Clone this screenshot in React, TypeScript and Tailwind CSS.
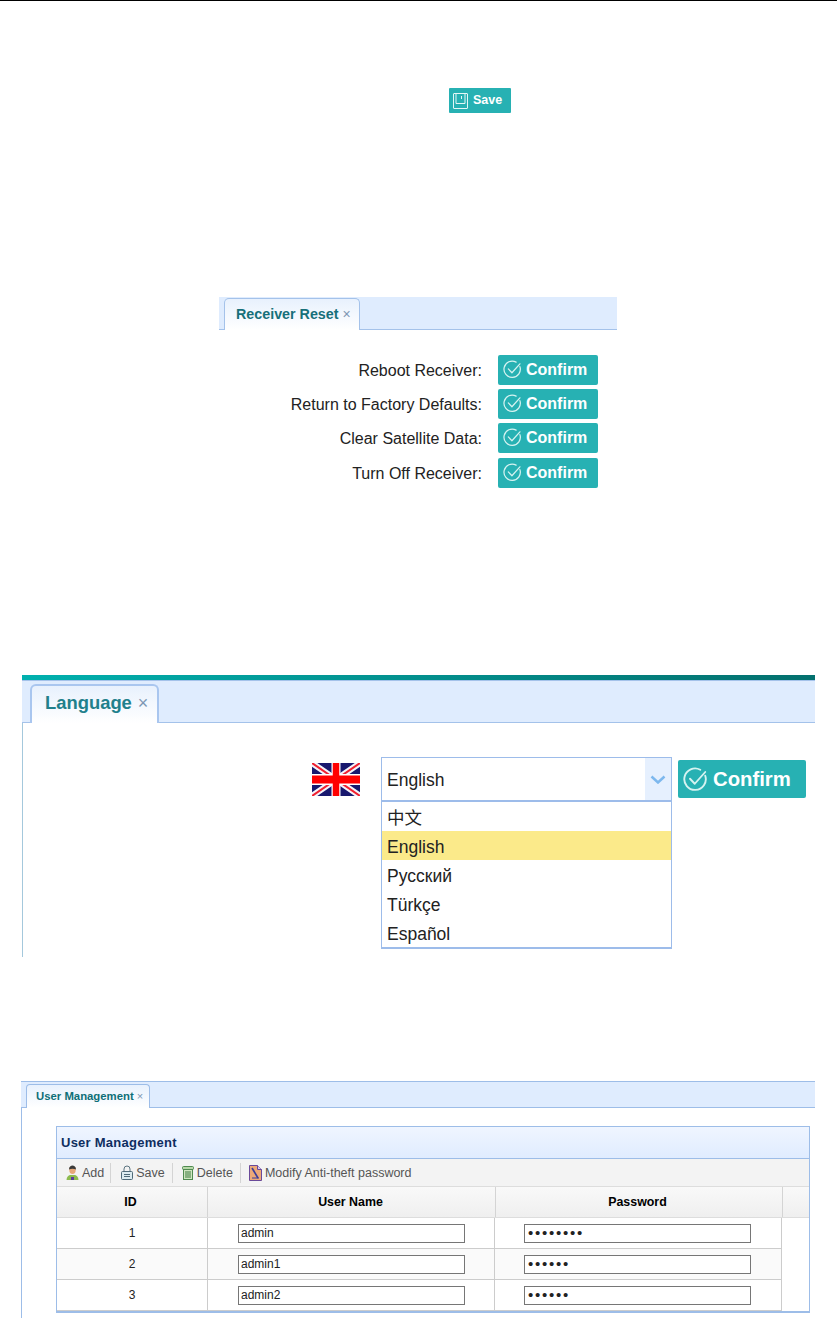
import React from "react";

function CheckCircle({ size, sw = 1.3 }: { size: number; sw?: number }) {
  return (
    <svg width={size} height={size} viewBox="0 0 20 20" fill="none" stroke="#d6f3f1" strokeWidth={sw} className="shrink-0">
      <path d="M17.8 7A8.6 8.6 0 1 1 13.8 2.200" strokeLinecap="round" />
      <path d="M5.600 9.400l3.800 4 8.400-9.400" strokeLinecap="round" strokeLinejoin="round" />
    </svg>
  );
}

function ConfirmBtn() {
  return (
    <div className="w-[100px] h-[30px] bg-[#27b1b3] rounded-[2px] flex items-center pl-[5px] gap-[4px] text-white font-bold text-[16px] leading-none shrink-0">
      <div className="-mt-[1px]"><CheckCircle size={19} /></div>
      <span>Confirm</span>
    </div>
  );
}

function Flag() {
  return (
    <svg width="48" height="33" viewBox="0 0 48 33" className="shrink-0">
      <rect width="48" height="33" fill="#18186e" />
      <path d="M0 0L48 33M48 0L0 33" stroke="#f4f4fa" strokeWidth="6" />
      <path d="M0 0L48 33M48 0L0 33" stroke="#f02030" strokeWidth="2" />
      <path d="M24 0V33" stroke="#fff" strokeWidth="9" />
      <path d="M0 16.500H48" stroke="#fff" strokeWidth="11" />
      <path d="M24 0V33" stroke="#ff0000" strokeWidth="6.500" />
      <path d="M0 16.500H48" stroke="#ff0000" strokeWidth="8" />
    </svg>
  );
}

function AddIcon() {
  return (
    <svg width="13" height="16" viewBox="0 0 13 16" className="shrink-0">
      <path d="M0.5 15c0-3 2-4.500 3.500-5h5c1.500.5 3.500 2 3.500 5z" fill="#8dbb4e" />
      <rect x="5" y="12" width="3" height="3" fill="#5a3e9e" />
      <ellipse cx="6.500" cy="5" rx="3.200" ry="4" fill="#e8a878" />
      <path d="M3 4.500C3 1.500 5 .5 6.500 .5S10 1.500 10 4.500C8 3.500 5 3.500 3 4.500z" fill="#3a3a3a" />
    </svg>
  );
}

function LockIcon() {
  return (
    <svg width="12" height="15" viewBox="0 0 12 15" fill="none" className="shrink-0">
      <path d="M3 7V4a3 3 0 0 1 6 0v3" stroke="#5b7480" />
      <rect x=".5" y="6.500" width="11" height="8" rx="1" fill="#dcebf0" stroke="#4f6a78" />
      <path d="M3 9.500h6M3 11.500h6" stroke="#4f6a78" />
    </svg>
  );
}

function TrashIcon() {
  return (
    <svg width="12" height="15" viewBox="0 0 12 15" fill="none" className="shrink-0">
      <rect x=".5" y="1.500" width="11" height="3" rx="1" fill="#b7d8a8" stroke="#4f8a50" />
      <rect x="1.500" y="4.500" width="9" height="10" fill="#cfe6c0" stroke="#4f8a50" />
      <path d="M4 6v7M6 6v7M8 6v7" stroke="#3f7a40" />
    </svg>
  );
}

function EditIcon() {
  return (
    <svg width="13" height="16" viewBox="0 0 13 16" className="shrink-0">
      <path d="M.5 .5H8.500L12.500 4.500V15.500H.5z" fill="#eda878" stroke="#6a4a9a" />
      <path d="M8.500 .5V4.500H12.500" fill="#d8c8f0" stroke="#6a4a9a" />
      <path d="M3 3L9 13" stroke="#3a3a9a" strokeWidth="1.600" />
      <path d="M3 13h7" stroke="#3a3a9a" />
    </svg>
  );
}

function Sep({ className }: { className: string }) {
  return <div className={`w-px h-[20px] bg-[#d4d4d4] ${className}`} />;
}

function Tool({ icon, label }: { icon: React.ReactNode; label: string }) {
  return (
    <div className="flex items-center gap-[3px]">
      {icon}
      <span className="mt-[2px]">{label}</span>
    </div>
  );
}

const rows = [
  { id: "1", name: "admin", pw: "••••••••", bg: "bg-white" },
  { id: "2", name: "admin1", pw: "••••••", bg: "bg-[#fafafa]" },
  { id: "3", name: "admin2", pw: "••••••", bg: "bg-white" },
];

const resetRows = [
  { t: "Reboot Receiver:", c: "" },
  { t: "Return to Factory Defaults:", c: "mt-[4px]" },
  { t: "Clear Satellite Data:", c: "mt-[4px]" },
  { t: "Turn Off Receiver:", c: "mt-[5px]" },
];
const langs = ["中文", "English", "Русский", "Türkçe", "Español"];

export default function App() {
  return (
    <div className="w-[837px] h-[1318px] bg-white overflow-hidden text-black" style={{ fontFamily: '"Liberation Sans", "Noto Sans CJK SC", sans-serif' }}>
      <div className="h-px bg-black" />

      {/* Save button */}
      <div className="mt-[87px] ml-[449px] w-[62px] h-[25px] bg-[#27b1b3] rounded-[1px] flex items-center pl-[4px] gap-[5px] text-white font-bold text-[12.500px] leading-none">
        <svg width="15" height="16" viewBox="0 0 15 16" fill="none" stroke="#e4f7f6" className="shrink-0">
          <path d="M1 .5H14a.5.5 0 0 1 .5 .5V15a.5.5 0 0 1-.5 .5H1a.5.5 0 0 1-.5-.5V1A.5.5 0 0 1 1 .5z" />
          <path d="M3 .5V10.500H12V.5M8.500 3V6" />
        </svg>
        <span>Save</span>
      </div>

      {/* Receiver Reset */}
      <div className="mt-[184px] ml-[219px] w-[398px]">
        <div className="h-[33px] bg-[#dfecfe] border-b border-[#a4c2ea] flex items-end pl-[5px]">
          <div className="w-[136px] h-[32px] -mb-px bg-gradient-to-b from-[#e8f1fd] to-white border border-b-0 border-[#a4c2ea] rounded-t-[5px] flex items-center pl-[11px] gap-[4px] text-[14.300px] font-bold text-[#17707a]">
            <span>Receiver Reset</span>
            <span className="text-[#7d97b4] font-normal text-[14px]">×</span>
          </div>
        </div>
        <div className="mt-[25px] flex flex-col pr-[19px]">
          {resetRows.map((r) => (
            <div key={r.t} className={`flex items-center justify-end gap-[16px] text-[16px] text-[#222] ${r.c}`}>
              <span className="mt-[2px]">{r.t}</span>
              <ConfirmBtn />
            </div>
          ))}
        </div>
      </div>

      {/* Language */}
      <div className="mt-[187px] ml-[22px] w-[793px] h-[282px] border-l border-[#a4c8dc]">
        <div className="h-[5px] -ml-px bg-gradient-to-r from-[#00b0ae] to-[#03706e]" />
        <div className="h-[43px] bg-[#dfecfe] border-t border-b border-[#a4c2ea] flex items-end pl-[8px] -ml-px">
          <div className="w-[129px] h-[39px] -mb-px bg-gradient-to-b from-[#e8f1fd] to-white border-2 border-b-0 border-[#a9c6ef] rounded-t-[6px] flex items-center pl-[13px] pb-[3px] gap-[6px] text-[18.400px] font-bold text-[#21808c]">
            <span>Language</span>
            <span className="text-[#7d97b4] font-normal text-[18px]">×</span>
          </div>
        </div>
        <div className="relative flex items-start">
          <div className="ml-[289px] mt-[40px]"><Flag /></div>
          <div className="ml-[21px] mt-[34px] w-[291px] flex flex-col text-[17.500px] text-[#222]">
            <div className="h-[45px] border border-b-2 border-[#9dbcea] flex items-center pl-[5px] relative">
              <span className="mt-[2px]">English</span>
              <div className="absolute right-0 top-0 bottom-0 w-[26px] bg-[#e6f0fe] flex items-center justify-center">
                <svg width="16" height="9" viewBox="0 0 16 9" fill="none" stroke="#7db8ee" strokeWidth="2.500">
                  <path d="M1.500 1.500L8 7.500L14.500 1.500" />
                </svg>
              </div>
            </div>
            <div className="h-[147px] border border-t-0 border-b-2 border-[#9dbcea] flex flex-col">
              {langs.map((l, i) => (
                <div key={l} className={`h-[29px] flex items-center pl-[5px] pt-[3px] ${i === 1 ? "bg-[#fbea8a]" : ""}`}>{l}</div>
              ))}
            </div>
          </div>
          <div className="ml-[6px] mt-[37px] w-[128px] h-[38px] bg-[#27b1b3] rounded-[2px] flex items-center pl-[5px] gap-[5px] text-white font-bold text-[20.300px] leading-none">
            <CheckCircle size={25} sw={1.500} />
            <span>Confirm</span>
          </div>
        </div>
      </div>

      {/* User Management */}
      <div className="mt-[124px] ml-[21px] w-[794px] border-l border-[#9dbde8] h-[237px]">
        <div className="h-[27px] -ml-px bg-[#dfecfe] border-t border-b border-[#9dbde8] flex items-end pl-[5px]">
          <div className="w-[124px] h-[24px] -mb-px bg-gradient-to-b from-[#e8f1fd] to-white border border-b-0 border-[#9dbde8] rounded-t-[4px] flex items-center pl-[9px] gap-[3px] text-[11.350px] font-bold text-[#0e6f78]">
            <span>User Management</span>
            <span className="text-[#7d97b4] font-normal text-[11px]">×</span>
          </div>
        </div>
        <div className="mt-[18px] ml-[34px] w-[754px] border border-[#9dbde8] border-b-2">
          <div className="h-[32px] bg-gradient-to-b from-[#eff5ff] to-[#e0ecff] border-b border-[#9dbde8] flex items-center pl-[4px] text-[13px] font-bold text-[#0e2d5f] tracking-[0.250px]">
            User Management
          </div>
          <div className="h-[28px] bg-[#f3f3f3] border-b border-[#ddd] flex items-center pl-[9px] text-[12.500px] text-[#555]">
            <Tool icon={<AddIcon />} label="Add" />
            <Sep className="ml-[6px] mr-[10px]" />
            <Tool icon={<LockIcon />} label="Save" />
            <Sep className="ml-[7px] mr-[9px]" />
            <Tool icon={<TrashIcon />} label="Delete" />
            <Sep className="ml-[7px] mr-[8px]" />
            <Tool icon={<EditIcon />} label="Modify Anti-theft password" />
          </div>
          <div className="h-[31px] grid grid-cols-[151px_288px_287px_1fr] bg-gradient-to-b from-[#f9f9f9] to-[#efefef] border-b border-[#ddd] text-[12.400px] font-bold">
            <div className="border-r border-[#d4d4d4] flex items-center justify-center pr-[3px]">ID</div>
            <div className="border-r border-[#d4d4d4] flex items-center justify-center pr-[2px]">User Name</div>
            <div className="border-r border-[#d4d4d4] flex items-center justify-center pr-[3px]">Password</div>
            <div />
          </div>
          {rows.map((r) => (
            <div key={r.id} className="h-[31px] grid grid-cols-[151px_287px_287px_1fr] text-[12px] text-[#222]">
              <div className={`${r.bg} border-r border-b border-[#cccccc] flex items-center justify-center`}>{r.id}</div>
              <div className={`${r.bg} border-r border-b border-[#cccccc] flex items-center pl-[30px]`}>
                <div className="w-[227px] h-[19px] bg-white border border-[#767676] flex items-center pl-[2px]">{r.name}</div>
              </div>
              <div className={`${r.bg} border-r border-b border-[#cccccc] flex items-center pl-[29px]`}>
                <div className="w-[227px] h-[19px] bg-white border border-[#767676] flex items-center pl-[3px] text-[15px] tracking-[1.750px]">{r.pw}</div>
              </div>
              <div />
            </div>
          ))}
        </div>
      </div>
    </div>
  );
}
